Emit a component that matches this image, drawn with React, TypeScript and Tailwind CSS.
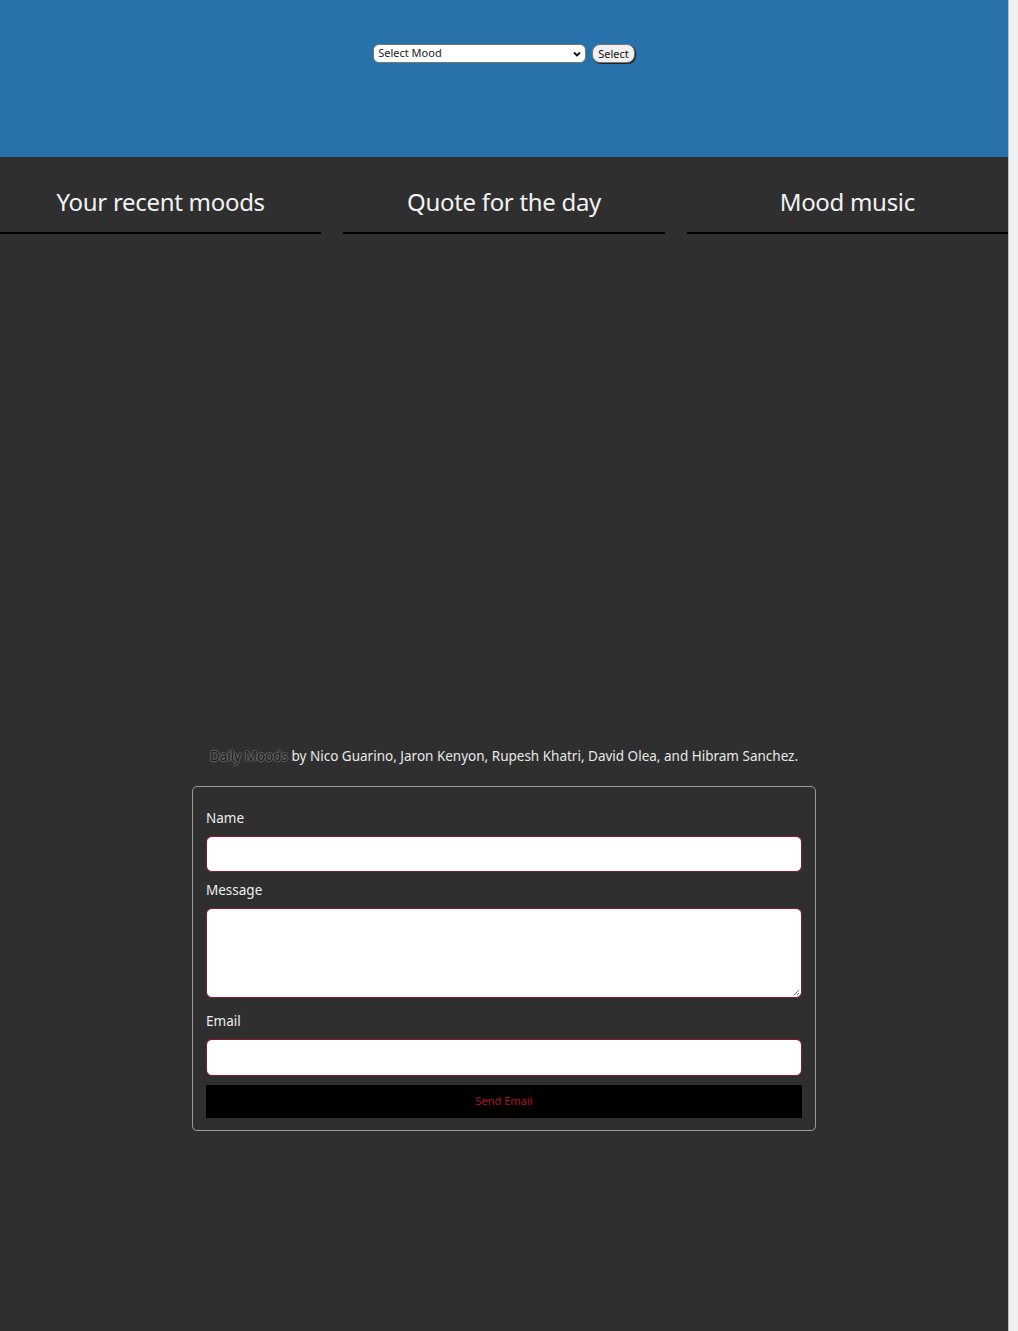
import React from "react";

export default function App() {
  const font = { fontFamily: '"Noto Sans", "Open Sans", sans-serif' };
  return (
    <div className="flex min-h-[1331px] w-full bg-[#f0f0f0]" style={font}>
      <div className="flex w-[1009px] flex-col bg-[#2f2f2f] border-r border-[#bdbdbd]">
        <header className="flex h-[157px] justify-center bg-[#2872ac] pt-[44px]">
          <div className="flex h-[19px] items-center gap-[6px]">
            <div className="flex h-[19px] w-[213px] items-center justify-between rounded-[6px] border border-[#767676] bg-white pl-[4px] pr-[3px] text-[11px] text-[#222]">
              <span>Select Mood</span>
              <svg width="10" height="10" viewBox="0 0 10 10"><path d="M2 3.5 L5 6.5 L8 3.5" stroke="#111" strokeWidth="1.8" fill="none" /></svg>
            </div>
            <button className="h-[19px] rounded-[8px] border border-[#767676] bg-[#efefef] px-[5px] text-[11px] leading-none text-[#111] shadow-[1px_1px_0_#222]">Select</button>
          </div>
        </header>
        <div className="grid grid-cols-3 gap-[22px]">
          {["Your recent moods", "Quote for the day", "Mood music"].map((t) => (
            <div key={t} className="flex h-[77px] items-end justify-center border-b-2 border-black pb-[18px]">
              <h2 className="text-[24px] leading-none tracking-[-0.3px] text-[#f2f2f2]">{t}</h2>
            </div>
          ))}
        </div>
        <div className="h-[512px]" />
        <p className="text-center text-[13.5px] text-[#e8e8e8]">
          <span className="text-[#1a1a1a] [text-shadow:1px_0_1px_#666,-1px_0_1px_#666,0_1px_1px_#666,0_-1px_1px_#666]">Daily Moods</span> by Nico Guarino, Jaron Kenyon, Rupesh Khatri, David Olea, and Hibram Sanchez.
        </p>
        <div className="mt-[20px] flex justify-center">
          <form className="flex w-[624px] flex-col rounded-[5px] border border-[#9a9a9a] px-[13px] pt-[25px] pb-[12px]">
            <label className="text-[13.5px] leading-none text-[#eee]">Name</label>
            <div className="mt-[10px] h-[36px] rounded-[6px] border border-[#8b1a2a] bg-white" />
            <label className="mt-[12px] text-[13.5px] leading-none text-[#eee]">Message</label>
            <div className="relative mt-[11px] h-[90px] rounded-[6px] border border-[#8b1a2a] bg-white">
              <svg className="absolute bottom-[1px] right-[1px]" width="8" height="8" viewBox="0 0 8 8"><path d="M7 2 L2 7 M7 5 L5 7" stroke="#777" strokeWidth="1" /></svg>
            </div>
            <label className="mt-[17px] text-[13.5px] leading-none text-[#eee]">Email</label>
            <div className="mt-[10px] h-[37px] rounded-[6px] border border-[#8b1a2a] bg-white" />
            <button type="button" className="mt-[9px] h-[33px] bg-black text-[11px] text-[#b0102a]">Send Email</button>
          </form>
        </div>
      </div>
    </div>
  );
}
